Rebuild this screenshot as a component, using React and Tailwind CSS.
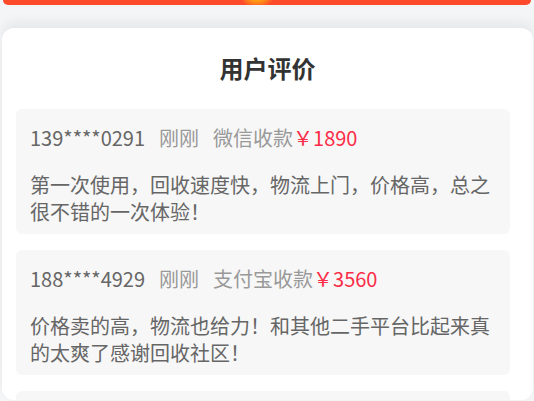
import React from 'react';

const REVIEWS = [
  { phone: '139****0291', time: '刚刚', pay: '微信收款', amount: '1890', text: '第一次使用，回收速度快，物流上门，价格高，总之很不错的一次体验！' },
  { phone: '188****4929', time: '刚刚', pay: '支付宝收款', amount: '3560', text: '价格卖的高，物流也给力！和其他二手平台比起来真的太爽了感谢回收社区！' },
];

export default function App() {
  return (
    <div
      className="w-[534px] h-[401px] overflow-hidden bg-[#f4f5f7]"
      style={{ fontFamily: '"Noto Sans CJK SC", "Noto Sans", sans-serif' }}
    >
      {/* top banner edge */}
      <div className="relative mx-[3px] h-[5px] rounded-b-[10px] bg-[#ff4a2b] overflow-hidden">
        <div className="absolute left-[234px] top-[-22px] w-[40px] h-[28px] rounded-full bg-[radial-gradient(circle_at_50%_40%,#ffc21a_0%,#ff9a14_45%,rgba(255,74,43,0)_75%)]" />
      </div>

      {/* reviews card */}
      <div className="mt-[23px] ml-[2px] mr-[1px] h-[372px] overflow-hidden rounded-[12px] bg-white shadow-[0_-6px_12px_rgba(0,0,0,0.06)]">
        <h2 className="pt-[24px] text-center text-[24px] leading-[32px] font-bold text-[#333]">用户评价</h2>

        <div className="mt-[25px] ml-[14px] mr-[23px] flex flex-col gap-[16px]">
          {REVIEWS.map((r) => (
            <div key={r.phone} className="rounded-[6px] bg-[#f7f7f7] pl-[14px] pr-[10px] pt-[15px] pb-[9px]">
              <div className="flex items-center text-[20px] leading-[28px] whitespace-nowrap">
                <span className="text-[#666]">{r.phone}</span>
                <span className="ml-[14px] text-[#999]">{r.time}</span>
                <span className="ml-[14px] text-[#999]">{r.pay}</span>
                <span className="text-[#fb2d48]">￥{r.amount}</span>
              </div>
              <p className="mt-[19px] text-[20px] leading-[27px] text-[#666]">{r.text}</p>
            </div>
          ))}
          {/* next review, scrolled out of view */}
          <div className="h-[120px] rounded-[6px] bg-[#f7f7f7]" />
        </div>
      </div>
    </div>
  );
}
